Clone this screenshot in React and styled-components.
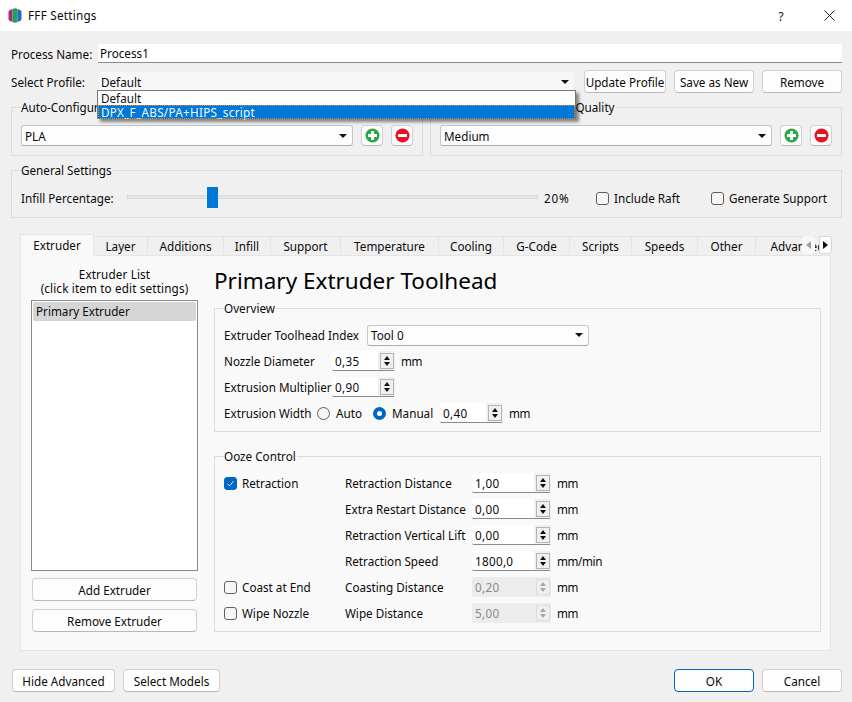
import React from 'react';
import styled, { createGlobalStyle } from 'styled-components';

const GlobalStyle = createGlobalStyle`
  html, body {
    margin: 0;
    padding: 0;
    background: #f0f0f0;
  }
  * {
    box-sizing: border-box;
  }
`;

const Window = styled.div`
  position: relative;
  width: 852px;
  height: 702px;
  overflow: hidden;
  background: #f0f0f0;
  color: #0a0a0a;
  font-family: 'Noto Sans', 'Open Sans', sans-serif;
  font-size: 11.7px;
  line-height: 16px;
`;

const TitleBar = styled.div`
  display: flex;
  align-items: center;
  height: 31px;
  padding: 0 16px 0 8px;
  background: #fff;
`;

const Title = styled.div`
  margin: 0 0 2px 6px;
  flex: 1;
  letter-spacing: 0.25px;
`;

const TitleButton = styled.div`
  display: flex;
  justify-content: center;
  margin-left: ${(p) => p.$gap || 0}px;
  width: 14px;
`;

const Body = styled.div`
  display: flex;
  flex-direction: column;
  padding: 13px 10px 0 11px;
`;

const FormRow = styled.div`
  display: flex;
  align-items: center;
  height: ${(p) => p.$height}px;
  margin-bottom: ${(p) => p.$after || 0}px;
`;

const FieldLabel = styled.div`
  width: 87px;
`;

const NameField = styled.div`
  flex: 1;
  height: 19px;
  padding: 1px 2px;
  background: #fff;
  border-bottom: 1px solid #8a8a8a;
`;

const Combo = styled.div`
  display: flex;
  align-items: center;
  justify-content: space-between;
  flex: none;
  width: ${(p) => p.$width}px;
  height: ${(p) => p.$height || 21}px;
  padding: 0 5px 0 ${(p) => (p.$flat ? 2 : 3)}px;
  background: ${(p) => (p.$flat ? '#f7f7f7' : '#fdfdfd')};
  border: 1px solid ${(p) => (p.$flat ? '#f0f0f0' : '#c6c6c6')};
  border-bottom-color: ${(p) => (p.$flat ? '#f0f0f0' : '#ababab')};
  border-radius: 3px;
`;

const Arrow = styled.span`
  width: 0;
  height: 0;
  border-left: 4px solid transparent;
  border-right: 4px solid transparent;
  border-top: 4px solid #111;
`;

const Button = styled.div`
  display: flex;
  align-items: center;
  justify-content: center;
  flex: ${(p) => (p.$width ? `0 0 ${p.$width}px` : 'none')};
  height: ${(p) => p.$height || 23}px;
  margin-left: ${(p) => p.$left || 0}px;
  white-space: nowrap;
  background: #fdfdfd;
  border: 1px solid ${(p) => (p.$primary ? '#0067c0' : '#d0d0d0')};
  border-bottom-color: ${(p) => (p.$primary ? '#0067c0' : '#b8b8b8')};
  border-radius: 4px;
`;

const GroupRow = styled.div`
  display: flex;
  gap: 7px;
`;

const Group = styled.div`
  position: relative;
  width: ${(p) => (p.$width ? `${p.$width}px` : 'auto')};
  flex: ${(p) => (p.$grow ? 1 : 'none')};
  height: ${(p) => p.$height}px;
  margin-top: ${(p) => p.$top || 0}px;
  border: 1px solid #dcdcdc;
`;

const GroupTitle = styled.div`
  position: absolute;
  top: -9px;
  left: 9px;
  padding: 0 1px 0 0;
  background: ${(p) => p.$bg || '#f0f0f0'};
  white-space: nowrap;
`;

const GroupBody = styled.div`
  display: flex;
  align-items: center;
  gap: 8px;
  height: 100%;
  padding: 8px 9px 0;
`;

const IconButton = styled(Button)`
  flex: 0 0 22px;
  height: 21px;
`;

const Popup = styled.div`
  position: absolute;
  left: 97px;
  top: 90px;
  width: 479px;
  height: 29px;
  background: #fff;
  border: 1px solid #767676;
  box-shadow: 3px 3px 3px rgba(0, 0, 0, 0.45);
`;

const PopupItem = styled.div`
  height: 14px;
  padding-left: 3px;
  line-height: 14px;
  letter-spacing: ${(p) => (p.$active ? 0.3 : 0)}px;
  color: ${(p) => (p.$active ? '#f2f8fd' : '#111')};
  background: ${(p) => (p.$active ? '#0078d7' : '#fff')};
  outline: ${(p) => (p.$active ? '1px dotted #f08a24' : 'none')};
  outline-offset: -1px;
`;

const SliderRow = styled.div`
  display: flex;
  align-items: center;
  height: 100%;
  padding: 8px 0 0 9px;
`;

const SliderLabel = styled.div`
  width: 106px;
`;

const SliderTrack = styled.div`
  position: relative;
  width: 411px;
  height: 4px;
  margin-bottom: 2px;
  background: #e6e6e6;
  border: 1px solid #dadada;
`;

const SliderHandle = styled.div`
  position: absolute;
  left: ${(p) => p.$at}px;
  top: -9px;
  width: 11px;
  height: 21px;
  background: #0078d7;
`;

const Percent = styled.div`
  margin-left: 6px;
  width: 52px;
  letter-spacing: 0.8px;
`;

const CheckWrap = styled.div`
  display: flex;
  align-items: center;
  gap: 5px;
  width: ${(p) => (p.$width ? `${p.$width}px` : 'auto')};
`;

const CheckBox = styled.span`
  display: flex;
  align-items: center;
  justify-content: center;
  flex: none;
  width: 13px;
  height: 13px;
  background: ${(p) => (p.$checked ? '#0067c0' : '#f6f6f6')};
  border: 1px solid ${(p) => (p.$checked ? '#0067c0' : '#5f5f5f')};
  border-radius: 3px;
`;

const Radio = styled.span`
  display: inline-block;
  flex: none;
  width: 13px;
  height: 13px;
  margin-left: ${(p) => p.$left || 0}px;
  background: ${(p) => (p.$checked ? '#fff' : '#f6f6f6')};
  border: ${(p) => (p.$checked ? '4px solid #0067c0' : '1px solid #5f5f5f')};
  border-radius: 50%;
`;

const TabArea = styled.div`
  position: relative;
  margin: 16px 0 0 9px;
  width: 811px;
`;

const TabStrip = styled.div`
  display: flex;
  align-items: flex-end;
  height: 22px;
  overflow: hidden;
`;

const Tab = styled.div`
  display: flex;
  align-items: center;
  justify-content: center;
  flex: 0 0 ${(p) => p.$width}px;
  height: ${(p) => (p.$active ? 22 : 20)}px;
  padding-bottom: ${(p) => (p.$active ? 1 : 0)}px;
  background: ${(p) => (p.$active ? '#f9f9f9' : '#f0f0f0')};
  border: 1px solid #e5e5e5;
  border-left-width: ${(p) => (p.$first ? 1 : 0)}px;
  border-bottom-width: ${(p) => (p.$active ? 0 : 1)}px;
  white-space: nowrap;
`;

const ScrollButton = styled.div`
  position: absolute;
  top: 2px;
  left: ${(p) => p.$left}px;
  display: flex;
  align-items: center;
  justify-content: center;
  width: 13px;
  height: 18px;
  background: ${(p) => (p.$off ? '#f8f8f8' : '#fff')};
  border: 1px solid ${(p) => (p.$off ? '#f8f8f8' : '#d5d5d5')};
  border-radius: 3px;
`;

const ScrollArrow = styled.span`
  width: 0;
  height: 0;
  border-top: 4.5px solid transparent;
  border-bottom: 4.5px solid transparent;
  ${(p) =>
    p.$off
      ? 'border-right: 5px solid #a0a0a0;'
      : 'border-left: 5px solid #111;'}
`;

const TabPanel = styled.div`
  display: flex;
  gap: 16px;
  height: 395px;
  padding: 11px 9px 0 10px;
  background: #f9f9f9;
  border: 1px solid #e5e5e5;
  border-top-width: 0;
`;

const ListColumn = styled.div`
  display: flex;
  flex-direction: column;
  width: 167px;
  flex: none;
`;

const ListCaption = styled.div`
  height: 33px;
  line-height: 14px;
  letter-spacing: 0.15px;
  text-align: center;
  white-space: nowrap;
`;

const ListBox = styled.div`
  height: 271px;
  padding: 1px;
  background: #fff;
  border: 1px solid #8a8a94;
`;

const ListItem = styled.div`
  height: 19px;
  padding-left: 3px;
  line-height: 19px;
  background: #d5d5d5;
  border-radius: 2px;
`;

const ListButtons = styled.div`
  display: flex;
  flex-direction: column;
  gap: 8px;
  margin: 7px 1px 0;
`;

const DetailColumn = styled.div`
  display: flex;
  flex-direction: column;
  flex: 1;
`;

const Heading = styled.div`
  height: 41px;
  font-size: 22.5px;
  line-height: 28px;
  color: #000;
`;

const PanelRow = styled.div`
  display: flex;
  align-items: center;
  height: 26px;
  white-space: nowrap;
`;

const Rows = styled.div`
  display: flex;
  flex-direction: column;
  padding: 13px 9px 0;
`;

const RowLabel = styled.div`
  width: ${(p) => p.$width}px;
  padding-left: ${(p) => p.$pad || 0}px;
  flex: none;
`;

const Spin = styled.div`
  display: flex;
  align-items: center;
  justify-content: space-between;
  flex: none;
  width: ${(p) => p.$width}px;
  height: 20px;
  padding-left: 3px;
  letter-spacing: 0.3px;
  color: ${(p) => (p.$off ? '#8a8a8a' : '#0a0a0a')};
  background: ${(p) => (p.$off ? '#ececec' : '#fff')};
  border-bottom: 1px solid ${(p) => (p.$off ? '#ececec' : '#8a8a8a')};
  border-radius: 2px;
`;

const SpinSide = styled.div`
  display: flex;
  align-items: center;
  justify-content: center;
  width: 17px;
  height: 100%;
  background: ${(p) => (p.$off ? '#ececec' : '#f0f0f0')};
`;

const SpinButtons = styled.div`
  display: flex;
  flex-direction: column;
  align-items: center;
  justify-content: space-evenly;
  width: 14px;
  height: 16px;
  background: #f0f0f0;
  border: 1px solid ${(p) => (p.$off ? '#dcdcdc' : '#b4b4b4')};
`;

const SpinUp = styled.span`
  width: 0;
  height: 0;
  border-left: 3.5px solid transparent;
  border-right: 3.5px solid transparent;
  border-bottom: 4px solid ${(p) => (p.$off ? '#a8a8a8' : '#111')};
`;

const SpinDown = styled.span`
  width: 0;
  height: 0;
  border-left: 3.5px solid transparent;
  border-right: 3.5px solid transparent;
  border-top: 4px solid ${(p) => (p.$off ? '#a8a8a8' : '#111')};
`;

const Unit = styled.div`
  margin-left: 6px;
  letter-spacing: -0.4px;
`;

const Footer = styled.div`
  display: flex;
  gap: 8px;
  margin: 18px 0 0 1px;
`;

const FooterSpacer = styled.div`
  flex: 1;
`;

const TABS = [
  ['Extruder', 74],
  ['Layer', 54],
  ['Additions', 76],
  ['Infill', 47],
  ['Support', 70],
  ['Temperature', 98],
  ['Cooling', 65],
  ['G-Code', 66],
  ['Scripts', 62],
  ['Speeds', 66],
  ['Other', 58],
  ['Advanced', 84],
];

const OOZE = [
  { check: 'Retraction', on: true, label: 'Retraction Distance', value: '1,00', unit: 'mm' },
  { label: 'Extra Restart Distance', value: '0,00', unit: 'mm' },
  { label: 'Retraction Vertical Lift', value: '0,00', unit: 'mm' },
  { label: 'Retraction Speed', value: '1800,0', unit: 'mm/min' },
  { check: 'Coast at End', label: 'Coasting Distance', value: '0,20', unit: 'mm', off: true },
  { check: 'Wipe Nozzle', label: 'Wipe Distance', value: '5,00', unit: 'mm', off: true },
];

function AppIcon() {
  return (
    <svg width="14" height="15" viewBox="0 0 14 15">
      <path d="M0.5 4 Q0.5 2.5 2 2 L4.5 1 V14 L2 13 Q0.5 12.5 0.5 11z" fill="#b0267f" />
      <path d="M4.5 1 Q7 -0.5 9.5 1 V14 Q7 15.5 4.5 14z" fill="#23a05a" />
      <path d="M9.5 1 L12 2 Q13.5 2.5 13.5 4 V11 Q13.5 12.5 12 13 L9.5 14z" fill="#1d6cc6" />
    </svg>
  );
}

function CloseIcon() {
  return (
    <svg width="11" height="11" viewBox="0 0 11 11">
      <path d="M.5.5l10 10M10.5.5l-10 10" stroke="#222" fill="none" />
    </svg>
  );
}

function RoundIcon({ color, plus }) {
  return (
    <svg width="15" height="15" viewBox="0 0 15 15">
      <circle cx="7.5" cy="7.5" r="7" fill={color} />
      <rect x="3" y="6" width="9" height="3" fill="#fff" />
      {plus && <rect x="6" y="3" width="3" height="9" fill="#fff" />}
    </svg>
  );
}

function CheckMark() {
  return (
    <svg width="9" height="9" viewBox="0 0 9 9">
      <path d="M1.5 4.8l2 2 4-4.6" stroke="#d8e8f8" fill="none" />
    </svg>
  );
}

function Check({ checked, children, width }) {
  return (
    <CheckWrap $width={width}>
      <CheckBox $checked={checked}>{checked && <CheckMark />}</CheckBox>
      {children}
    </CheckWrap>
  );
}

function SpinBox({ value, width = 63, off }) {
  return (
    <Spin $width={width} $off={off}>
      {value}
      <SpinSide $off={off}>
        <SpinButtons $off={off}>
          <SpinUp $off={off} />
          <SpinDown $off={off} />
        </SpinButtons>
      </SpinSide>
    </Spin>
  );
}

function ConfigGroup({ title, value, width }) {
  return (
    <Group $height={49} $width={width} $grow={!width}>
      <GroupTitle>{title}</GroupTitle>
      <GroupBody>
        <Combo $width={332}>
          {value}
          <Arrow />
        </Combo>
        <IconButton>
          <RoundIcon color="#2aa845" plus />
        </IconButton>
        <IconButton>
          <RoundIcon color="#e81224" />
        </IconButton>
      </GroupBody>
    </Group>
  );
}

export default function App() {
  return (
    <Window>
      <GlobalStyle />
      <TitleBar>
        <AppIcon />
        <Title>FFF Settings</Title>
        <TitleButton>?</TitleButton>
        <TitleButton $gap={34}>
          <CloseIcon />
        </TitleButton>
      </TitleBar>
      <Body>
        <FormRow $height={19} $after={7}>
          <FieldLabel>Process Name:</FieldLabel>
          <NameField>Process1</NameField>
        </FormRow>
        <FormRow $height={23} $after={14}>
          <FieldLabel>Select Profile:</FieldLabel>
          <Combo $width={477} $flat>
            Default
            <Arrow />
          </Combo>
          <Button $width={82} $left={9}>
            Update Profile
          </Button>
          <Button $width={80} $left={8}>
            Save as New
          </Button>
          <Button $width={80} $left={8}>
            Remove
          </Button>
        </FormRow>
        <GroupRow>
          <ConfigGroup title="Auto-Configure for Material" value="PLA" width={412} />
          <ConfigGroup title="Auto-Configure for Print Quality" value="Medium" />
        </GroupRow>
        <Group $height={48} $top={14}>
          <GroupTitle>General Settings</GroupTitle>
          <SliderRow>
            <SliderLabel>Infill Percentage:</SliderLabel>
            <SliderTrack>
              <SliderHandle $at={79} />
            </SliderTrack>
            <Percent>20%</Percent>
            <Check width={115}>Include Raft</Check>
            <Check>Generate Support</Check>
          </SliderRow>
        </Group>
        <TabArea>
          <TabStrip>
            {TABS.map(([name, width], i) => (
              <Tab key={name} $width={width} $active={i === 0} $first={i === 0}>
                {name}
              </Tab>
            ))}
          </TabStrip>
          <ScrollButton $left={782} $off>
            <ScrollArrow $off />
          </ScrollButton>
          <ScrollButton $left={799}>
            <ScrollArrow />
          </ScrollButton>
          <TabPanel>
            <ListColumn>
              <ListCaption>
                Extruder List
                <br />
                (click item to edit settings)
              </ListCaption>
              <ListBox>
                <ListItem>Primary Extruder</ListItem>
              </ListBox>
              <ListButtons>
                <Button>Add Extruder</Button>
                <Button>Remove Extruder</Button>
              </ListButtons>
            </ListColumn>
            <DetailColumn>
              <Heading>Primary Extruder Toolhead</Heading>
              <Group $height={124}>
                <GroupTitle $bg="#f9f9f9">Overview</GroupTitle>
                <Rows>
                  <PanelRow>
                    <RowLabel $width={143}>Extruder Toolhead Index</RowLabel>
                    <Combo $width={222}>
                      Tool 0
                      <Arrow />
                    </Combo>
                  </PanelRow>
                  <PanelRow>
                    <RowLabel $width={108}>Nozzle Diameter</RowLabel>
                    <SpinBox value="0,35" />
                    <Unit>mm</Unit>
                  </PanelRow>
                  <PanelRow>
                    <RowLabel $width={108}>Extrusion Multiplier</RowLabel>
                    <SpinBox value="0,90" />
                  </PanelRow>
                  <PanelRow>
                    <RowLabel $width={93}>Extrusion Width</RowLabel>
                    <Radio />
                    <RowLabel $width={37} $pad={6}>
                      Auto
                    </RowLabel>
                    <Radio $checked $left={6} />
                    <RowLabel $width={54} $pad={6}>
                      Manual
                    </RowLabel>
                    <SpinBox value="0,40" />
                    <Unit>mm</Unit>
                  </PanelRow>
                </Rows>
              </Group>
              <Group $height={176} $top={24}>
                <GroupTitle $bg="#f9f9f9">Ooze Control</GroupTitle>
                <Rows>
                  {OOZE.map((row) => (
                    <PanelRow key={row.label}>
                      <RowLabel $width={121}>
                        {row.check && <Check checked={row.on}>{row.check}</Check>}
                      </RowLabel>
                      <RowLabel $width={127}>{row.label}</RowLabel>
                      <SpinBox value={row.value} width={79} off={row.off} />
                      <Unit>{row.unit}</Unit>
                    </PanelRow>
                  ))}
                </Rows>
              </Group>
            </DetailColumn>
          </TabPanel>
        </TabArea>
        <Footer>
          <Button $width={103}>Hide Advanced</Button>
          <Button $width={97}>Select Models</Button>
          <FooterSpacer />
          <Button $width={80} $primary>
            OK
          </Button>
          <Button $width={80}>Cancel</Button>
        </Footer>
      </Body>
      <Popup>
        <PopupItem>Default</PopupItem>
        <PopupItem $active>DPX_F_ABS/PA+HIPS_script</PopupItem>
      </Popup>
    </Window>
  );
}
